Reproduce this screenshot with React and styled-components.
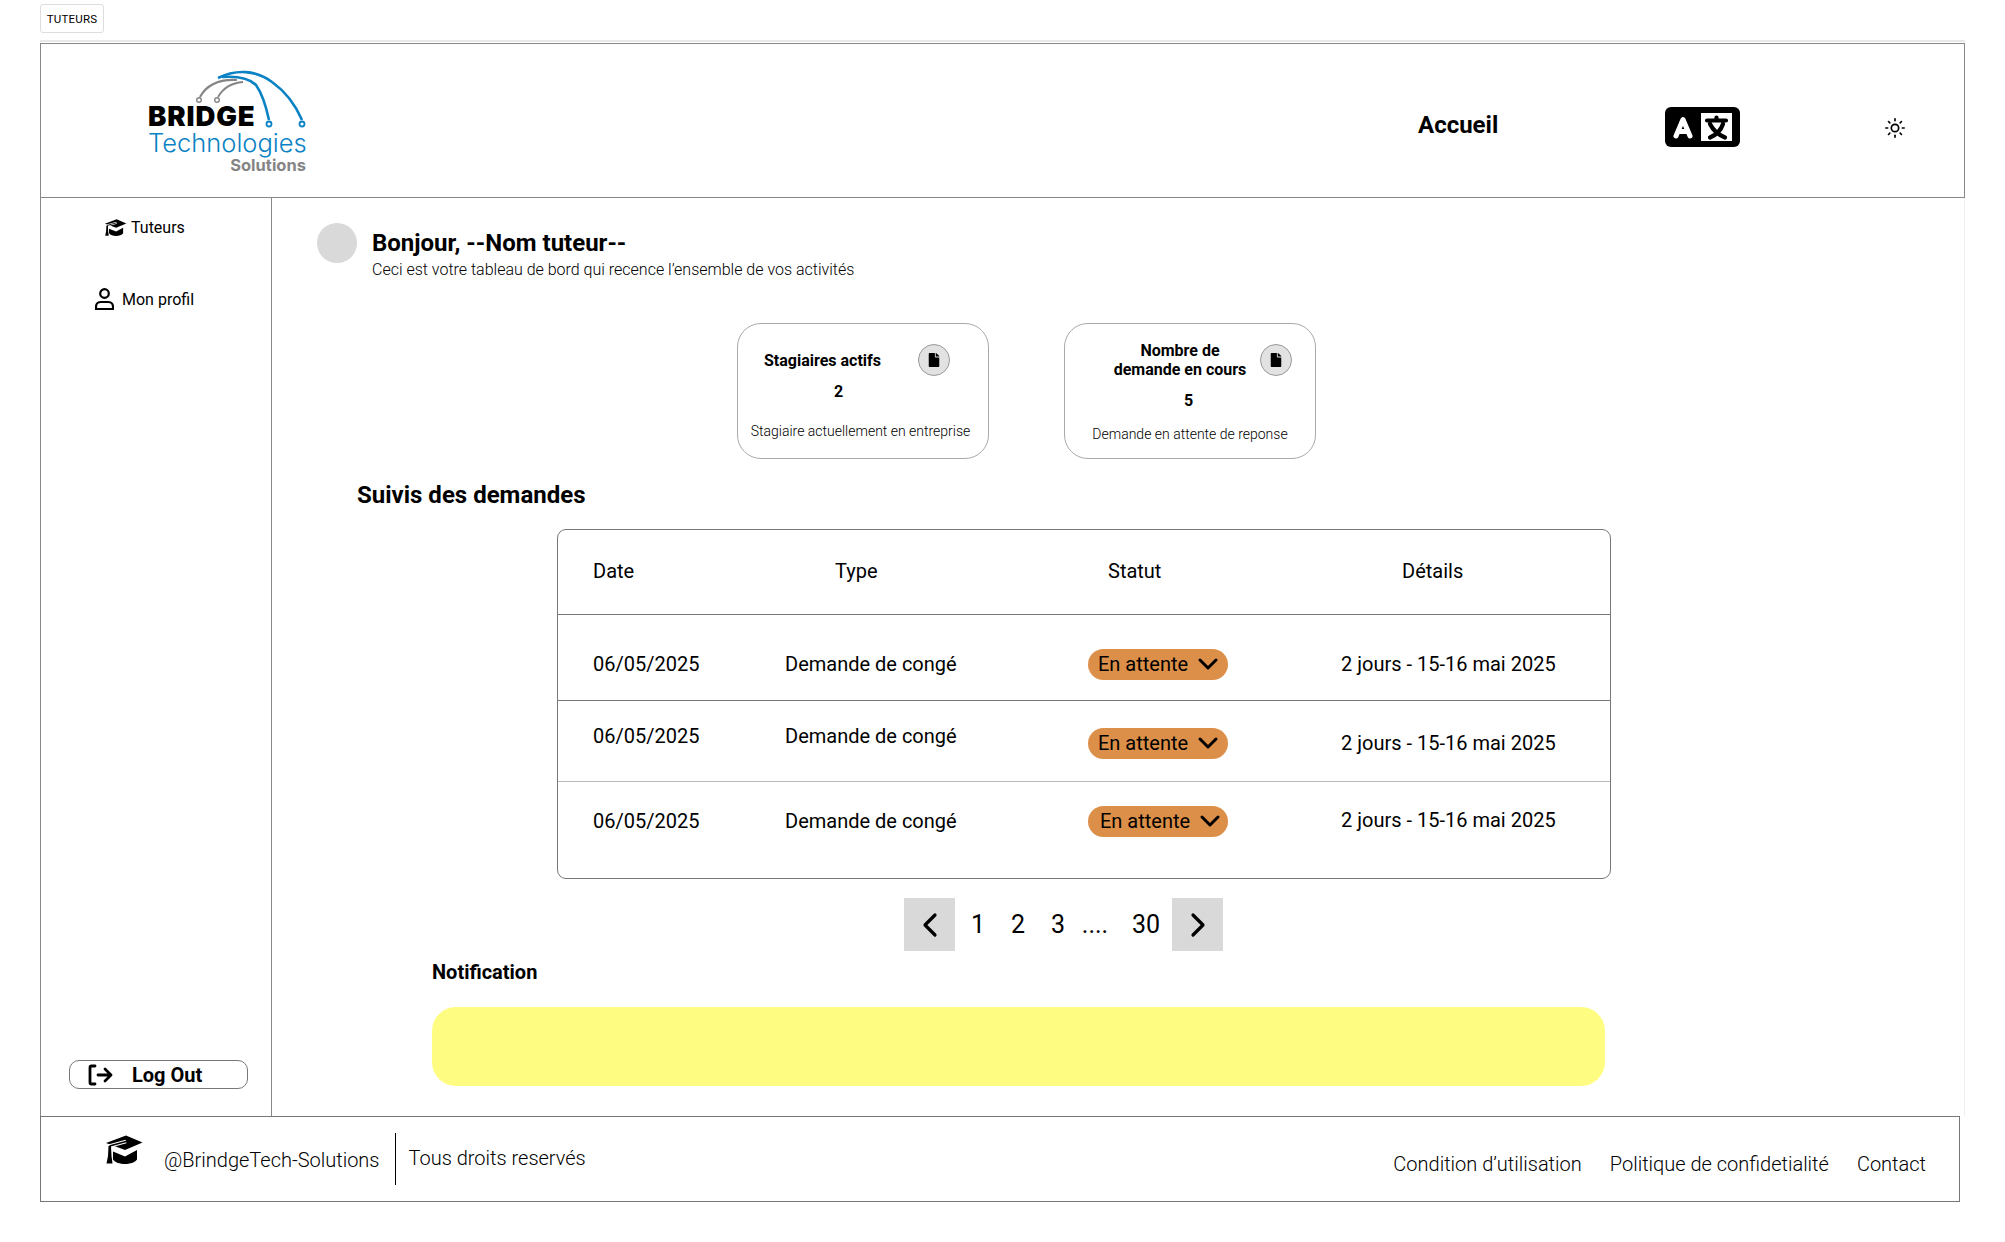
import React from "react";
import styled, { createGlobalStyle } from "styled-components";
import { FaFile } from "react-icons/fa";
import { Sun } from "lucide-react";

const GlobalStyle = createGlobalStyle`
  * { box-sizing: border-box; }
  body {
    margin: 0;
    background: #fff;
    color: #000;
    font-family: Roboto, "Liberation Sans", sans-serif;
  }
`;

const Page = styled.div`
  width: 2005px;
  height: 1242px;
  padding: 4px 40px 0 40px;
  overflow: hidden;
`;
const Tag = styled.div`
  width: 64px;
  height: 29px;
  border: 1px solid #ddd;
  border-radius: 3px;
  display: flex;
  align-items: center;
  justify-content: center;
  font-size: 11.5px;
  letter-spacing: 0.2px;
`;
const TopRule = styled.div`
  height: 2px;
  margin-top: 7px;
  margin-bottom: 1px;
  background: #e8e8e8;
`;
const Header = styled.header`
  height: 155px;
  border: 1.5px solid #888;
  display: flex;
  align-items: center;
`;
const Logo = styled.div`
  position: relative;
  width: 1270px;
  margin-left: 107px;
  padding-top: 35px;
  display: flex;
  flex-direction: column;
`;
const LogoArcs = styled.svg`
  position: absolute;
  left: 40px;
  top: 0;
`;
const LogoBridge = styled.div`
  font-family: Inter, sans-serif;
  font-weight: 900;
  font-size: 27.5px;
  line-height: 26px;
  letter-spacing: 0.9px;
`;
const LogoTech = styled.div`
  width: 158px;
  font-family: Inter, sans-serif;
  font-weight: 300;
  font-size: 25.5px;
  line-height: 28px;
  color: #0a82c4;
  white-space: nowrap;
`;
const LogoSolutions = styled.div`
  width: 158px;
  text-align: right;
  font-family: Inter, sans-serif;
  font-weight: 700;
  font-size: 16.5px;
  line-height: 16px;
  color: #858585;
`;
const HomeLink = styled.div`
  width: 247px;
  font-size: 24px;
  font-weight: 700;
  margin-top: 8px;
`;
const TranslateWrap = styled.div`
  display: flex;
  margin-top: 12px;
`;
const SunWrap = styled.div`
  margin: 14px 0 0 144px;
  display: flex;
`;

const Body = styled.div`
  height: 918px;
  display: flex;
  border-left: 1.5px solid #888;
`;
const Sidebar = styled.aside`
  width: 231px;
  flex: none;
  border-right: 1.5px solid #888;
  display: flex;
  flex-direction: column;
`;
const NavItem = styled.div`
  height: 24px;
  margin-top: ${p => p.$top}px;
  padding-left: ${p => p.$left}px;
  display: flex;
  align-items: center;
  gap: ${p => p.$gap}px;
  font-size: 16px;
`;
const LogOutButton = styled.div`
  width: 179px;
  height: 29px;
  margin: auto 0 27px 28px;
  padding-left: 18px;
  border: 1px solid #777;
  border-radius: 10px;
  display: flex;
  align-items: center;
  gap: 18px;
  font-size: 20px;
  font-weight: 700;
`;

const Main = styled.main`
  flex: 1;
  border-right: 1px solid #eee;
  padding-top: 25px;
`;
const Greeting = styled.div`
  margin-left: 45px;
  display: flex;
  gap: 15px;
`;
const Avatar = styled.div`
  width: 40px;
  height: 40px;
  border-radius: 50%;
  background: #d9d9d9;
`;
const GreetingText = styled.div`
  margin-top: 6px;
`;
const Hello = styled.div`
  font-size: 24px;
  line-height: 28px;
  font-weight: 700;
`;
const HelloSub = styled.div`
  margin-top: 3px;
  font-size: 16px;
  line-height: 20px;
  font-weight: 300;
`;

const Cards = styled.div`
  margin: 43px 0 0 465px;
  display: flex;
  gap: 75px;
`;
const Card = styled.div`
  width: 252px;
  height: 136px;
  border: 1px solid #aaa;
  border-radius: 24px;
  padding-top: ${p => p.$top}px;
`;
const CardHead = styled.div`
  display: flex;
  align-items: center;
  padding-left: ${p => p.$left}px;
  min-height: 32px;
`;
const CardTitle = styled.div`
  width: ${p => p.$width}px;
  text-align: ${p => p.$align};
  font-size: 16px;
  line-height: 19px;
  font-weight: 700;
`;
const FileBadge = styled.div`
  width: 32px;
  height: 32px;
  flex: none;
  border-radius: 50%;
  background: #e2e2e2;
  border: 1px solid #999;
  display: flex;
  align-items: center;
  justify-content: center;
  font-size: 14px;
`;
const CardValue = styled.div`
  margin-top: ${p => p.$top}px;
  padding-left: ${p => p.$left}px;
  font-size: 16px;
  line-height: 20px;
  font-weight: 700;
`;
const CardDesc = styled.div`
  margin-top: ${p => p.$top}px;
  padding-right: ${p => p.$shift || 0}px;
  text-align: center;
  font-size: 14px;
  line-height: 20px;
  font-weight: 300;
`;

const SectionTitle = styled.h2`
  margin: 22px 0 0 85px;
  font-size: 24px;
  line-height: 28px;
  font-weight: 700;
`;

const Table = styled.div`
  width: 1054px;
  height: 350px;
  margin: 20px 0 0 285px;
  border: 1px solid #777;
  border-radius: 9px;
  font-size: 20px;
  line-height: 24px;
`;
const HeadRow = styled.div`
  height: 85px;
  padding: 0 0 2px 35px;
  display: grid;
  grid-template-columns: 242px 273px 294px 1fr;
  align-items: center;
  border-bottom: 1px solid #777;
`;
const Row = styled.div`
  height: ${p => p.$height}px;
  display: grid;
  grid-template-columns: 227px 303px 253px 1fr;
  align-items: start;
  border-bottom: ${p => (p.$line ? `${p.$lineWidth}px solid ${p.$line}` : "none")};
`;
const DateCell = styled.div`
  margin-top: ${p => p.$top}px;
  padding-left: 35px;
`;
const TextCell = styled.div`
  margin-top: ${p => p.$top}px;
`;
const StatusPill = styled.div`
  width: 140px;
  height: 31px;
  margin-top: ${p => p.$top}px;
  padding: 0 0 2px ${p => p.$pad}px;
  border-radius: 16px;
  background: #dc8f48;
  display: flex;
  align-items: center;
  gap: 9px;
`;

const Pagination = styled.nav`
  margin: 19px 0 0 632px;
  display: flex;
  align-items: center;
  font-size: 25px;
`;
const PageArrow = styled.div`
  width: 51px;
  height: 53px;
  background: #d9d9d9;
  display: flex;
  align-items: center;
  justify-content: center;
`;
const PageNumber = styled.div`
  width: ${p => p.$width}px;
  padding-right: ${p => p.$shift || 0}px;
  text-align: center;
`;

const NotifTitle = styled.div`
  margin: 9px 0 0 160px;
  font-size: 20px;
  line-height: 24px;
  font-weight: 700;
`;
const NotifBox = styled.div`
  width: 1173px;
  height: 79px;
  margin: 23px 0 0 160px;
  border-radius: 24px;
  background: #fffc82;
`;

const Footer = styled.footer`
  width: 1920px;
  height: 86px;
  border: 1.5px solid #777;
  padding: 0 33px 0 64px;
  display: flex;
  align-items: center;
  font-size: 20px;
  font-weight: 300;
`;
const FooterCap = styled.div`
  display: flex;
  margin: -19px 21px 0 0;
`;
const FooterHandle = styled.span`
  margin-top: 2px;
`;
const FooterDivider = styled.div`
  width: 1px;
  height: 52px;
  margin: 0 13px 0 15px;
  background: #000;
`;
const FooterNote = styled.span`
  margin-top: -3px;
`;
const FooterLinks = styled.div`
  margin-left: auto;
  margin-top: 10px;
  display: flex;
  gap: 28px;
`;

const rows = [
  { height: 86, date: 37, pill: 34, detail: 37, pad: 10, line: "#777", lineWidth: 1 },
  { height: 81, date: 23, pill: 27, detail: 30, pad: 10, line: "#bbb", lineWidth: 1.5 },
  { height: 94, date: 27, pill: 24, detail: 26, pad: 12 },
];

const CapIcon = ({ width, height }) => (
  <svg width={width} height={height} viewBox="0 0 38 29">
    <path d="M21 0.5L37.5 7.5 20 15 12 12 1 8z" fill="#000" />
    <path d="M8 16.5l12 5 12-6.5v9.5c-2 3-7 4.5-12 4.5s-10-1.5-12-4.5z" fill="#000" />
    <path d="M21 6.5L4.5 11" fill="none" stroke="#fff" strokeWidth="3.6" />
    <path d="M21 6.5L4.5 11" fill="none" stroke="#000" strokeWidth="1.5" />
    <path d="M3.5 11L6 11 6.5 21 7.5 28.5 1.5 28.5 3 21z" fill="#000" />
  </svg>
);

const Chevron = () => (
  <svg width="22" height="14" viewBox="0 0 22 14" fill="none" stroke="#000" strokeWidth="3" strokeLinecap="round" strokeLinejoin="round">
    <path d="M3 3l8 8 8-8" />
  </svg>
);

const PageChevron = ({ flip }) => (
  <svg width="16" height="26" viewBox="0 0 16 26" fill="none" stroke="#000" strokeWidth="3.2" strokeLinecap="round" strokeLinejoin="round">
    <path d={flip ? "M3 3l10 10L3 23" : "M13 3L3 13l10 10"} />
  </svg>
);

const ProfileIcon = () => (
  <svg width="19" height="22" viewBox="0 0 19 22" fill="none" stroke="#000" strokeWidth="2.2">
    <circle cx="9.5" cy="5.5" r="4.3" />
    <path d="M1 21v-2.5c0-2.8 2.4-4.5 5-4.5h7c2.6 0 5 1.7 5 4.5V21z" />
  </svg>
);

const LogOutIcon = () => (
  <svg width="26" height="22" viewBox="0 0 26 22" fill="none" stroke="#000" strokeWidth="2.8" strokeLinecap="round" strokeLinejoin="round">
    <path d="M7 2H3.5A1.5 1.5 0 0 0 2 3.5v15A1.5 1.5 0 0 0 3.5 20H7" />
    <path d="M10 11h13M17 5l6 6-6 6" />
  </svg>
);

const TranslateIcon = () => (
  <svg width="75" height="40" viewBox="0 0 75 40">
    <rect width="75" height="40" rx="6" fill="#000" />
    <path d="M11 29L18 12.5 25 29M14 24.5h8" fill="none" stroke="#fff" strokeWidth="5" strokeLinecap="round" strokeLinejoin="round" />
    <rect x="36" y="6" width="31" height="28" fill="#fff" />
    <path d="M42 13.5h19M51.5 10.5v3M45 17c3 6 9 11 15 13.5M58 17c-2 6-7 11-13 13.5" fill="none" stroke="#000" strokeWidth="4.2" strokeLinecap="round" />
  </svg>
);

function App() {
  return (
    <Page>
      <GlobalStyle />
      <Tag>TUTEURS</Tag>
      <TopRule />
      <Header>
        <Logo>
          <LogoArcs width="130" height="65" viewBox="0 0 130 65" fill="none">
            <path d="M30 10C48 1 68 2 84 14C98 24 108 38 114 52" stroke="#0a82c4" strokeWidth="2.6" />
            <path d="M34 9C48 8 60 9 68 17C73 24 78 38 81 52" stroke="#0a82c4" strokeWidth="2.6" />
            <circle cx="114" cy="56" r="2.5" stroke="#0a82c4" strokeWidth="1.8" fill="#fff" />
            <circle cx="81" cy="56" r="2.5" stroke="#0a82c4" strokeWidth="1.8" fill="#fff" />
            <path d="M12 29C18 18 30 11 49 12" stroke="#858585" strokeWidth="2.2" />
            <path d="M30 29C34 22 42 15 55 14" stroke="#858585" strokeWidth="1.8" />
            <circle cx="11" cy="32" r="2.3" stroke="#858585" strokeWidth="1.4" fill="#fff" />
            <circle cx="29" cy="32" r="2.3" stroke="#858585" strokeWidth="1.4" fill="#fff" />
          </LogoArcs>
          <LogoBridge>BRIDGE</LogoBridge>
          <LogoTech>Technologies</LogoTech>
          <LogoSolutions>Solutions</LogoSolutions>
        </Logo>
        <HomeLink>Accueil</HomeLink>
        <TranslateWrap><TranslateIcon /></TranslateWrap>
        <SunWrap>
          <Sun size={22} strokeWidth={1.8} />
        </SunWrap>
      </Header>

      <Body>
        <Sidebar>
          <NavItem $top={17} $left={63} $gap={4}>
            <CapIcon width={23} height={17} />
            Tuteurs
          </NavItem>
          <NavItem $top={48} $left={54} $gap={8}>
            <ProfileIcon />
            Mon profil
          </NavItem>
          <LogOutButton>
            <LogOutIcon />
            Log Out
          </LogOutButton>
        </Sidebar>

        <Main>
          <Greeting>
            <Avatar />
            <GreetingText>
              <Hello>Bonjour, --Nom tuteur--</Hello>
              <HelloSub>Ceci est votre tableau de bord qui recence l’ensemble de vos activités</HelloSub>
            </GreetingText>
          </Greeting>

          <Cards>
            <Card $top={20}>
              <CardHead $left={26}>
                <CardTitle $width={154} $align="left">Stagiaires actifs</CardTitle>
                <FileBadge><FaFile /></FileBadge>
              </CardHead>
              <CardValue $top={6} $left={96}>2</CardValue>
              <CardDesc $top={19} $shift={5}>Stagiaire actuellement en entreprise</CardDesc>
            </Card>
            <Card $top={17}>
              <CardHead $left={35}>
                <CardTitle $width={160} $align="center">Nombre de<br />demande en cours</CardTitle>
                <FileBadge><FaFile /></FileBadge>
              </CardHead>
              <CardValue $top={12} $left={119}>5</CardValue>
              <CardDesc $top={13}>Demande en attente de reponse</CardDesc>
            </Card>
          </Cards>

          <SectionTitle>Suivis des demandes</SectionTitle>

          <Table>
            <HeadRow>
              <div>Date</div>
              <div>Type</div>
              <div>Statut</div>
              <div>Détails</div>
            </HeadRow>
            {rows.map((row, i) => (
              <Row key={i} $height={row.height} $line={row.line} $lineWidth={row.lineWidth}>
                <DateCell $top={row.date}>06/05/2025</DateCell>
                <TextCell $top={row.date}>Demande de congé</TextCell>
                <StatusPill $top={row.pill} $pad={row.pad}>
                  En attente
                  <Chevron />
                </StatusPill>
                <TextCell $top={row.detail}>2 jours - 15-16 mai 2025</TextCell>
              </Row>
            ))}
          </Table>

          <Pagination>
            <PageArrow><PageChevron /></PageArrow>
            <PageNumber $width={46}>1</PageNumber>
            <PageNumber $width={34}>2</PageNumber>
            <PageNumber $width={46}>3</PageNumber>
            <PageNumber $width={39} $shift={11}>....</PageNumber>
            <PageNumber $width={52}>30</PageNumber>
            <PageArrow><PageChevron flip /></PageArrow>
          </Pagination>

          <NotifTitle>Notification</NotifTitle>
          <NotifBox />
        </Main>
      </Body>

      <Footer>
        <FooterCap><CapIcon width={38} height={29} /></FooterCap>
        <FooterHandle>@BrindgeTech-Solutions</FooterHandle>
        <FooterDivider />
        <FooterNote>Tous droits reservés</FooterNote>
        <FooterLinks>
          <span>Condition d’utilisation</span>
          <span>Politique de confidetialité</span>
          <span>Contact</span>
        </FooterLinks>
      </Footer>
    </Page>
  );
}

export default App;
